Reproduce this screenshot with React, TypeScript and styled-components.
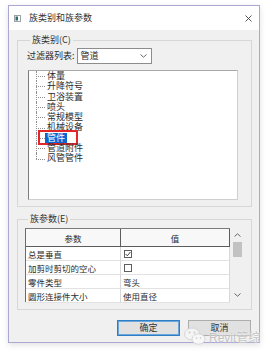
import React from "react";
import styled, { createGlobalStyle } from "styled-components";

const GlobalStyle = createGlobalStyle`
  html, body {
    margin: 0;
    padding: 0;
    background: #ffffff;
  }
  body {
    font-family: "Noto Sans CJK SC", "Noto Sans", sans-serif;
    color: #2b2b2b;
  }
`;

const Page = styled.div`
  position: relative;
  width: 278px;
  height: 357px;
  box-sizing: border-box;
  padding: 5px 0 0 8px;
  overflow: hidden;
`;

const Dialog = styled.div`
  width: 252px;
  height: 338px;
  box-sizing: border-box;
  border: 1px solid #aba7d3;
  background: #f0f0f0;
  box-shadow: 0 2px 6px rgba(0, 0, 0, 0.12);
  display: flex;
  flex-direction: column;
`;

const TitleBar = styled.div`
  height: 24px;
  flex-shrink: 0;
  background: #ffffff;
  display: flex;
  align-items: center;
  gap: 8px;
  padding: 0 7px 0 5px;
  font-size: 9px;
  line-height: 10px;
`;

const TitleText = styled.span`
  flex: 1;
  color: #333;
`;

const Body = styled.div`
  flex: 1;
  display: flex;
  flex-direction: column;
  padding: 5px 7px 6px 8px;
`;

const GroupBox = styled.fieldset<{ $pad: string; $top?: number }>`
  margin: ${(p) => p.$top ?? 0}px 0 0 0;
  padding: ${(p) => p.$pad};
  border: 1px solid #d7d7d7;
  min-width: 0;
`;

const GroupLegend = styled.legend`
  font-size: 9px;
  line-height: 10px;
  padding: 0 2px;
  margin-left: 3px;
  color: #333;
`;

const FilterRow = styled.div`
  display: flex;
  align-items: center;
  gap: 2px;
  margin-top: 3px;
  font-size: 9px;
  line-height: 10px;
`;

const ComboBox = styled.div`
  width: 75px;
  height: 16px;
  box-sizing: border-box;
  border: 1px solid #8d8d8d;
  background: #ffffff;
  display: flex;
  align-items: center;
  justify-content: space-between;
  padding: 0 4px 0 3px;
  font-size: 9px;
`;

const TreeBox = styled.div`
  width: 210px;
  height: 130px;
  box-sizing: border-box;
  margin: 6px 0 0 1px;
  background: #ffffff;
  border: 1px solid #cfcfcf;
  border-left-color: #7d7d7d;
  border-top-color: #a9a9a9;
`;

const TreeList = styled.ul`
  list-style: none;
  margin: 0;
  padding: 0;
`;

const TreeItem = styled.li<{ $last?: boolean }>`
  position: relative;
  height: 10.3px;
  line-height: 10.3px;
  padding-left: 18px;
  font-size: 9px;
  white-space: nowrap;
  &::before {
    content: "";
    position: absolute;
    left: 7px;
    top: 50%;
    width: 9px;
    border-top: 1px dotted #8e8e8e;
  }
  &::after {
    content: "";
    position: absolute;
    left: 7px;
    top: 0;
    height: ${(p) => (p.$last ? "50%" : "100%")};
    border-left: 1px dotted #8e8e8e;
  }
`;

const ItemLabel = styled.span<{ $selected?: boolean }>`
  position: relative;
  display: inline-block;
  padding: 0 2px;
  margin-left: -2px;
  background: ${(p) => (p.$selected ? "#0a67d2" : "transparent")};
  color: ${(p) => (p.$selected ? "#ffffff" : "#2b2b2b")};
  ${(p) =>
    p.$selected &&
    `
    &::after {
      content: "";
      position: absolute;
      left: -7px;
      right: -11px;
      top: -3px;
      bottom: -2px;
      border: 2px solid #e1262c;
    }
  `}
`;

const TableArea = styled.div`
  display: flex;
  margin-top: 4px;
  height: 74px;
`;

const Grid = styled.div`
  flex: 1;
  display: grid;
  grid-template-columns: 95px 1fr;
  grid-template-rows: 18px repeat(4, 14px);
  background: #ffffff;
  border-left: 1px solid #6b6b6b;
  border-top: 1px solid #7a7a7a;
`;

const HeadCell = styled.div`
  background: #f8f8f8;
  border-bottom: 1px solid #5c5c5c;
  border-right: 1px solid #5c5c5c;
  display: flex;
  align-items: center;
  justify-content: center;
  font-size: 8.5px;
`;

const Cell = styled.div`
  border-bottom: 1px solid #e2e2e2;
  border-right: 1px solid #d8d8d8;
  display: flex;
  align-items: center;
  padding-left: 2px;
  font-size: 8.5px;
  white-space: nowrap;
  overflow: hidden;
`;

const CheckBox = styled.span`
  width: 8px;
  height: 8px;
  box-sizing: border-box;
  border: 1px solid #5e5e5e;
  background: #ffffff;
  display: flex;
  align-items: center;
  justify-content: center;
  margin-left: 1px;
`;

const ScrollBar = styled.div`
  width: 14px;
  background: #f0f0f0;
  display: flex;
  flex-direction: column;
  align-items: center;
`;

const ScrollArrow = styled.div`
  height: 14px;
  display: flex;
  align-items: center;
  justify-content: center;
`;

const Thumb = styled.div`
  width: 9px;
  height: 15px;
  background: #c2c2c2;
`;

const ButtonRow = styled.div`
  margin-top: auto;
  display: flex;
  justify-content: flex-end;
  gap: 8px;
  padding-right: 1px;
`;

const Button = styled.button<{ $primary?: boolean }>`
  width: 63px;
  height: 16px;
  box-sizing: border-box;
  padding: 0;
  font-family: inherit;
  font-size: 9px;
  line-height: 10px;
  color: #333;
  background: #e1e1e1;
  border: 1px solid ${(p) => (p.$primary ? "#2f7fc6" : "#adadad")};
  box-shadow: ${(p) => (p.$primary ? "inset 0 0 0 1px #6aa6dc" : "none")};
`;

const Watermark = styled.div`
  position: absolute;
  left: 184px;
  top: 327px;
  display: flex;
  align-items: flex-end;
  gap: 3px;
  pointer-events: none;
`;

const WatermarkText = styled.span`
  font-family: "Liberation Sans", "Noto Sans CJK SC", sans-serif;
  font-size: 12px;
  line-height: 13px;
  color: #c3c3c3;
  text-shadow: 0 0 2px #ffffff;
  margin-bottom: 1px;
`;

const AppIcon = () => (
  <svg width="7" height="7" viewBox="0 0 7 7">
    <rect x="0.5" y="0.5" width="6" height="6" fill="#ffffff" stroke="#9aa3a8" />
    <rect x="1.5" y="1.5" width="2.5" height="4" fill="#2f6e6a" />
  </svg>
);

const CloseIcon = () => (
  <svg width="7" height="7" viewBox="0 0 7 7">
    <path d="M0.5 0.5 L6.5 6.5 M6.5 0.5 L0.5 6.5" stroke="#444" strokeWidth="0.9" />
  </svg>
);

const Chevron = ({ up }: { up?: boolean }) => (
  <svg width="7" height="4" viewBox="0 0 7 4">
    <path
      d={up ? "M0.5 3.5 L3.5 0.8 L6.5 3.5" : "M0.5 0.5 L3.5 3.2 L6.5 0.5"}
      fill="none"
      stroke="#666"
      strokeWidth="1"
    />
  </svg>
);

const Check = () => (
  <svg width="6" height="6" viewBox="0 0 6 6">
    <path d="M0.6 3 L2.3 4.8 L5.4 1" fill="none" stroke="#444" strokeWidth="1" />
  </svg>
);

const WeChatIcon = () => (
  <svg width="22" height="19" viewBox="0 0 22 19">
    <ellipse cx="8" cy="7" rx="7.5" ry="6" fill="#f4f4f4" stroke="#cfcfcf" strokeWidth="0.8" />
    <circle cx="5.5" cy="5.5" r="0.9" fill="#c8c8c8" />
    <circle cx="10.5" cy="5.5" r="0.9" fill="#c8c8c8" />
    <ellipse cx="14.5" cy="12" rx="6.5" ry="5.2" fill="#f7f7f7" stroke="#cfcfcf" strokeWidth="0.8" />
    <circle cx="12.5" cy="11" r="0.8" fill="#c8c8c8" />
    <circle cx="16.5" cy="11" r="0.8" fill="#c8c8c8" />
  </svg>
);

const categories = [
  "体量",
  "升降符号",
  "卫浴装置",
  "喷头",
  "常规模型",
  "机械设备",
  "管件",
  "管道附件",
  "风管管件",
];

type Param = { name: string; value: string; check?: boolean };

const params: Param[] = [
  { name: "总是垂直", value: "", check: true },
  { name: "加剪时剪切的空心", value: "", check: false },
  { name: "零件类型", value: "弯头" },
  { name: "圆形连接件大小", value: "使用直径" },
];

const App = () => {
  const selected = "管件";

  return (
    <Page>
      <GlobalStyle />
      <Dialog>
        <TitleBar>
          <AppIcon />
          <TitleText>族类别和族参数</TitleText>
          <CloseIcon />
        </TitleBar>
        <Body>
          <GroupBox $pad="0 12px 6px 9px">
            <GroupLegend>族类别(C)</GroupLegend>
            <FilterRow>
              <span>过滤器列表:</span>
              <ComboBox>
                <span>管道</span>
                <Chevron />
              </ComboBox>
            </FilterRow>
            <TreeBox>
              <TreeList>
                {categories.map((c, i) => (
                  <TreeItem key={c} $last={i === categories.length - 1}>
                    <ItemLabel $selected={c === selected}>{c}</ItemLabel>
                  </TreeItem>
                ))}
              </TreeList>
            </TreeBox>
          </GroupBox>
          <GroupBox $pad="0 7px 7px 7px" $top={7}>
            <GroupLegend>族参数(E)</GroupLegend>
            <TableArea>
              <Grid>
                <HeadCell>参数</HeadCell>
                <HeadCell>值</HeadCell>
                {params.map((p) => (
                  <React.Fragment key={p.name}>
                    <Cell>{p.name}</Cell>
                    <Cell>
                      {p.check !== undefined ? (
                        <CheckBox>{p.check && <Check />}</CheckBox>
                      ) : (
                        p.value
                      )}
                    </Cell>
                  </React.Fragment>
                ))}
              </Grid>
              <ScrollBar>
                <ScrollArrow>
                  <Chevron up />
                </ScrollArrow>
                <Thumb />
                <div style={{ flex: 1 }} />
                <ScrollArrow>
                  <Chevron />
                </ScrollArrow>
              </ScrollBar>
            </TableArea>
          </GroupBox>
          <ButtonRow>
            <Button $primary>确定</Button>
            <Button>取消</Button>
          </ButtonRow>
        </Body>
      </Dialog>
      <Watermark>
        <WeChatIcon />
        <WatermarkText>Revit管综</WatermarkText>
      </Watermark>
    </Page>
  );
};

export default App;
